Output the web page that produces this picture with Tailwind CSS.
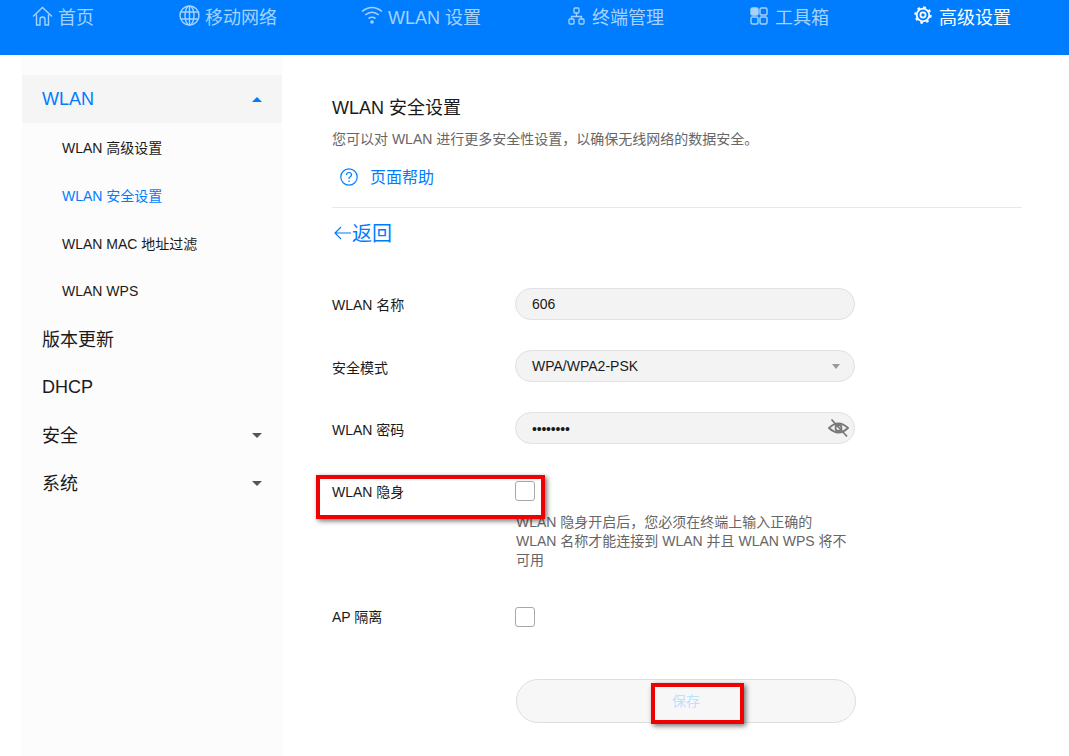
<!DOCTYPE html>
<html>
<head>
	<meta charset="UTF-8">
	<title>WLAN 安全设置</title>
	<script src="https://cdn.jsdelivr.net/npm/@tailwindcss/browser@4"></script>
</head>
<body class="bg-white text-[#1a1a1a] text-[14px] font-['Liberation_Sans','Noto_Sans_CJK_SC',sans-serif]">
	<div class="relative w-[1069px] h-[756px] overflow-hidden">
		<!-- top nav -->
		<div class="flex h-[55px] pl-[32px] bg-[#007dff] text-[18px] leading-[36px] text-[#a6d2ff]">
			<div class="flex items-start gap-[5px] w-[147px]">
				<svg class="w-[21px] h-[21px] mt-[6px]" viewBox="0 0 21 21" fill="none" stroke="currentColor" stroke-width="1.400"><path d="M1 10.500 10.500 1.500 20 10.500M4.500 8.500V19H8V13.500Q8 11 10.500 11T13 13.500V19H16.500V8.500"/></svg>
				<span>首页</span>
			</div>
			<div class="flex items-start gap-[5px] w-[182px]">
				<svg class="w-[21px] h-[21px] mt-[5px]" viewBox="0 0 21 21" fill="none" stroke="currentColor" stroke-width="1.400"><circle cx="10.500" cy="10.500" r="9.500"/><ellipse cx="10.500" cy="10.500" rx="4.500" ry="9.500"/><path d="M10.500 1V20M1.800 7H19.200M1.800 14H19.200"/></svg>
				<span>移动网络</span>
			</div>
			<div class="flex items-start gap-[5px] w-[207px]">
				<svg class="w-[22px] h-[20px] mt-[6px]" viewBox="0 0 22 20" fill="none" stroke="currentColor" stroke-width="1.600"><path d="M1 5.500Q11 -2.500 21 5.500M4.200 9Q11 3.500 17.800 9M7.500 12.500Q11 10 14.500 12.500"/><circle cx="11" cy="16" r="1.800" fill="currentColor" stroke="none"/></svg>
				<span>WLAN 设置</span>
			</div>
			<div class="flex items-start gap-[7px] w-[182px]">
				<svg class="w-[17px] h-[18px] mt-[7px]" viewBox="0 0 17 18" fill="none" stroke="currentColor" stroke-width="1.300"><rect x="6" y="1" width="5" height="5" rx="1"/><rect x="1" y="12" width="5" height="5" rx="1"/><rect x="11" y="12" width="5" height="5" rx="1"/><path d="M8.500 6V9.500M3.500 12V9.500H13.500V12"/></svg>
				<span>终端管理</span>
			</div>
			<div class="flex items-start gap-[7px] w-[164px]">
				<svg class="w-[18px] h-[18px] mt-[7px]" viewBox="0 0 18 18" fill="none" stroke="currentColor" stroke-width="1.400"><rect x="1" y="1" width="7" height="7" rx="1.500" fill="currentColor"/><rect x="10" y="1" width="7" height="7" rx="1.500"/><rect x="1" y="10" width="7" height="7" rx="1.500"/><rect x="10" y="10" width="7" height="7" rx="1.500"/></svg>
				<span>工具箱</span>
			</div>
			<div class="flex items-start gap-[7px] text-white">
				<svg class="w-[18px] h-[18px] mt-[6px]" viewBox="0 0 18 18" fill="none" stroke="currentColor"><circle cx="9" cy="9" r="6.300" stroke-width="1.800"/><circle cx="9" cy="9" r="2.600" stroke-width="1.700"/><circle cx="9" cy="9" r="7.700" stroke-width="2" stroke-dasharray="2.600 3.450"/></svg>
				<span>高级设置</span>
			</div>
		</div>

		<div class="flex">
			<!-- side menu -->
			<div class="ml-[22px] w-[260px] h-[701px] pt-[20px] bg-[#fcfcfc] shrink-0">
				<div class="flex items-center justify-between h-[48px] px-[20px] bg-[#f5f5f5] text-[18px] text-[#007dff]">
					<span>WLAN</span>
					<span class="w-0 h-0 border-x-[5px] border-x-transparent border-b-[5px] border-b-[#007dff]"></span>
				</div>
				<div class="flex items-center h-[48px] pl-[40px] pt-[2px]">WLAN 高级设置</div>
				<div class="flex items-center h-[48px] pl-[40px] pt-[2px] text-[#007dff]">WLAN 安全设置</div>
				<div class="flex items-center h-[48px] pl-[40px] pt-[2px]">WLAN MAC 地址过滤</div>
				<div class="flex items-center h-[48px] pl-[40px]">WLAN WPS</div>
				<div class="flex items-center h-[48px] pl-[20px] pt-[2px] text-[18px]">版本更新</div>
				<div class="flex items-center h-[48px] pl-[20px] text-[18px]">DHCP</div>
				<div class="flex items-center justify-between h-[48px] px-[20px] text-[18px]">
					<span class="pt-[2px]">安全</span>
					<span class="w-0 h-0 border-x-[5px] border-x-transparent border-t-[5px] border-t-[#555]"></span>
				</div>
				<div class="flex items-center justify-between h-[48px] px-[20px] text-[18px]">
					<span class="pt-[2px]">系统</span>
					<span class="w-0 h-0 border-x-[5px] border-x-transparent border-t-[5px] border-t-[#555]"></span>
				</div>
			</div>

			<!-- main content -->
			<div class="ml-[50px] w-[690px] pt-[41px]">
				<h1 class="text-[18px] leading-[24px]">WLAN 安全设置</h1>
				<p class="mt-[9px] leading-[20px] text-[#666]">您可以对 WLAN 进行更多安全性设置，以确保无线网络的数据安全。</p>
				<div class="flex items-center gap-[12px] mt-[16px] pl-[8px] h-[24px] text-[16px] text-[#007dff]">
					<svg class="w-[18px] h-[18px]" viewBox="0 0 18 18" fill="none" stroke="currentColor" stroke-width="1.200"><circle cx="9" cy="9" r="8.200"/><path d="M6.500 7Q6.500 4.500 9 4.500T11.500 6.800Q11.500 8 10 8.900T9 11"/><circle cx="9" cy="13.300" r=".8" fill="currentColor" stroke="none"/></svg>
					<span class="pt-[2px]">页面帮助</span>
				</div>
				<div class="mt-[18px] border-b border-[#e8e8e8]"></div>
				<div class="flex items-center mt-[11px] h-[28px] text-[20px] text-[#007dff]">
					<svg class="w-[17px] h-[14px] ml-[2px] mr-[1px]" viewBox="0 0 17 14" fill="none" stroke="currentColor" stroke-width="1.200"><path d="M7 1 1 7 7 13M1 7H17"/></svg>
					<span class="pt-[2px]">返回</span>
				</div>

				<div class="flex items-center mt-[41px] h-[32px]">
					<label class="w-[183px] pt-[3px]">WLAN 名称</label>
					<div class="flex items-center w-[340px] h-[32px] pl-[16px] rounded-full bg-[#f3f3f3] border border-[#e0e0e6]">606</div>
				</div>
				<div class="flex items-center mt-[30px] h-[32px]">
					<label class="w-[183px] pt-[4px]">安全模式</label>
					<div class="flex items-center justify-between w-[340px] h-[32px] pl-[16px] pr-[14px] rounded-full bg-[#f3f3f3] border border-[#e0e0e6]">
						<span>WPA/WPA2-PSK</span>
						<span class="w-0 h-0 border-x-[4.500px] border-x-transparent border-t-[5px] border-t-[#999]"></span>
					</div>
				</div>
				<div class="flex items-center mt-[30px] h-[32px]">
					<label class="w-[183px] pt-[4px]">WLAN 密码</label>
					<div class="flex items-center justify-between w-[340px] h-[32px] pl-[16px] pr-[5px] rounded-full bg-[#f3f3f3] border border-[#e0e0e6]">
						<span class="pt-[2px] text-[14px] tracking-[-0.2px]">••••••••</span>
						<svg class="w-[21px] h-[20px]" viewBox="0 0 21 20" fill="none" stroke="#777" stroke-width="1.800"><path d="M1 10Q10.500 1 20 10 10.500 19 1 10Z"/><circle cx="10.500" cy="10" r="3"/><path d="M3.500 1.500 19 18.500"/></svg>
					</div>
				</div>
				<div class="flex mt-[37px] h-[20px]">
					<label class="w-[183px] leading-[22px]">WLAN 隐身</label>
					<div class="w-[20px] h-[20px] bg-white rounded-[3px] border border-[#a8a8a8]"></div>
				</div>
				<p class="mt-[12px] ml-[184px] w-[340px] leading-[19px] text-[#666]">WLAN 隐身开启后，您必须在终端上输入正确的 WLAN 名称才能连接到 WLAN 并且 WLAN WPS 将不可用</p>
				<div class="flex mt-[37px] h-[20px]">
					<label class="w-[183px] leading-[20px]">AP 隔离</label>
					<div class="w-[20px] h-[20px] bg-white rounded-[3px] border border-[#a8a8a8]"></div>
				</div>
				<div class="flex items-center justify-center mt-[52px] ml-[184px] w-[340px] h-[44px] rounded-full bg-[#f7f7f7] border border-[#dedede] text-[#b8e2ff]">保存</div>
			</div>
		</div>

		<!-- red annotation boxes drawn over the screenshot -->
		<div class="absolute left-[316px] top-[475px] w-[229px] h-[44px] border-[4px] border-[#f00000] shadow-[2px_2px_5px_rgba(0,0,0,0.55)]"></div>
		<div class="absolute left-[651px] top-[683px] w-[93px] h-[41px] border-[4px] border-[#f00000] shadow-[2px_2px_5px_rgba(0,0,0,0.55)]"></div>
	</div>
</body>
</html>
